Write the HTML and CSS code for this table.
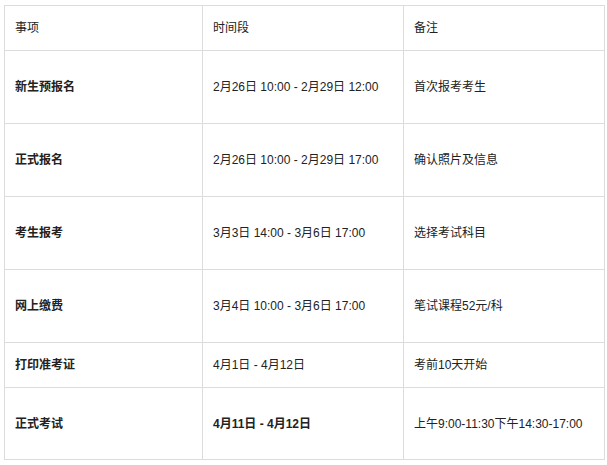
FILE: index.html
```html
<!DOCTYPE html>
<html lang="zh">
<head>
<meta charset="utf-8">
<link rel="stylesheet" href="styles.css">
</head>
<body>
<table class="sched">
  <colgroup><col class="c1"><col class="c2"><col class="c3"></colgroup>
  <tr class="short"><td>事项</td><td>时间段</td><td>备注</td></tr>
  <tr class="tall"><td class="item">新生预报名</td><td>2月26日 10:00 - 2月29日 12:00</td><td>首次报考考生</td></tr>
  <tr class="tall"><td class="item">正式报名</td><td>2月26日 10:00 - 2月29日 17:00</td><td>确认照片及信息</td></tr>
  <tr class="tall"><td class="item">考生报考</td><td>3月3日 14:00 - 3月6日 17:00</td><td>选择考试科目</td></tr>
  <tr class="tall"><td class="item">网上缴费</td><td>3月4日 10:00 - 3月6日 17:00</td><td>笔试课程52元/科</td></tr>
  <tr class="short"><td class="item">打印准考证</td><td>4月1日 - 4月12日</td><td>考前10天开始</td></tr>
  <tr class="last"><td class="item">正式考试</td><td class="item">4月11日 - 4月12日</td><td>上午9:00-11:30下午14:30-17:00</td></tr>
</table>
</body>
</html>
```
FILE: styles.css
```css
html, body { margin: 0; padding: 0; background: #fff; }
body { padding: 5px 0 0 4px; }
.sched {
  border-collapse: collapse;
  table-layout: fixed;
  width: 600px;
  font-family: "Liberation Sans", "Noto Sans CJK SC", sans-serif;
  font-size: 12px;
  color: #222;
}
.c1 { width: 198px; }
.c2 { width: 201px; }
.c3 { width: 201px; }
.sched td {
  border: 1px solid #dcdcdc;
  padding: 0 10px;
  vertical-align: middle;
  white-space: nowrap;
  line-height: 16px;
}
.short td { height: 44px; }
.tall td { height: 72px; }
.last td { height: 71px; }
.sched td.item { font-weight: bold; }
```
